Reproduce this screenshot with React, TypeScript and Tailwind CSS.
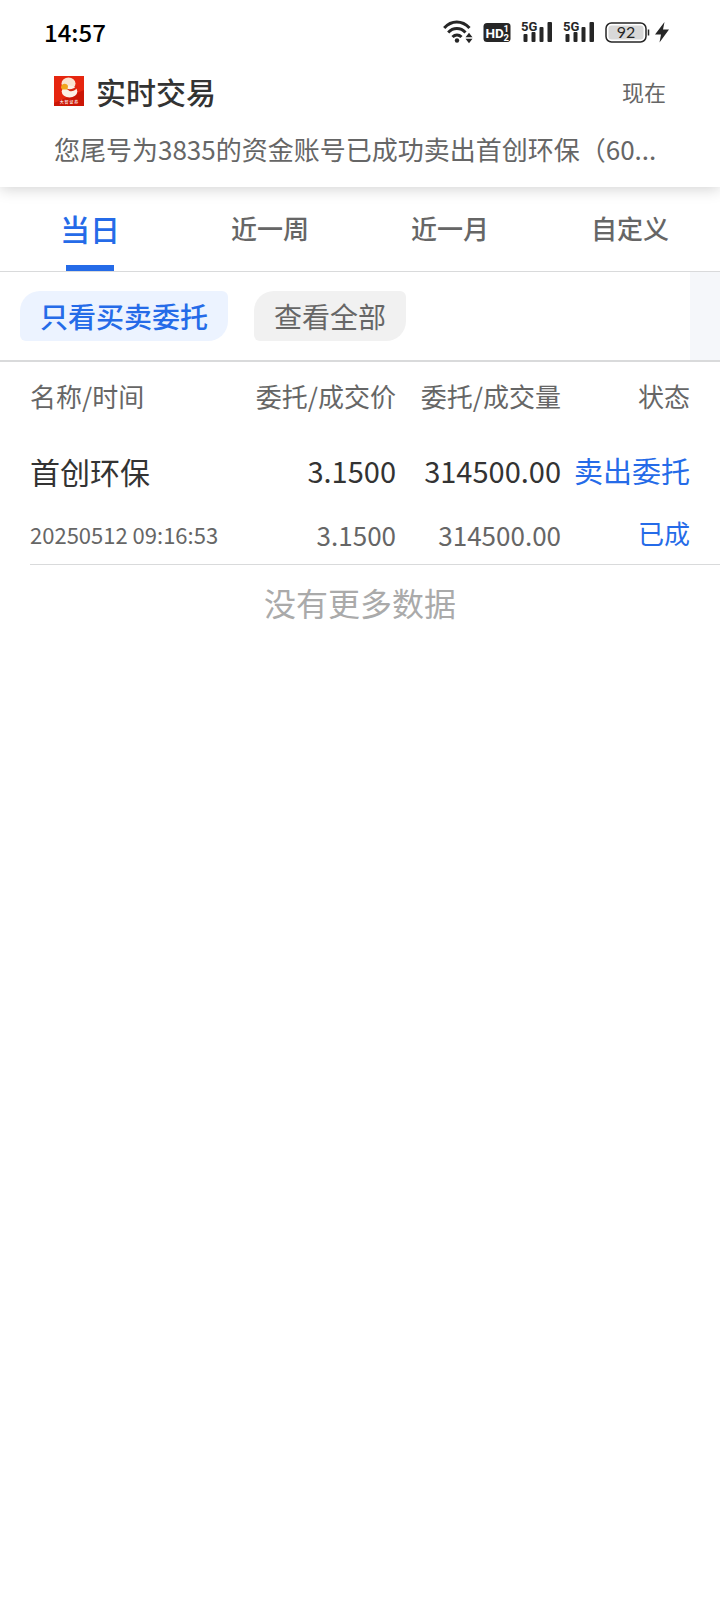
import { useState } from "react";
import clsx from "clsx";

const tabs = ["当日", "近一周", "近一月", "自定义"];
const filters = ["只看买卖委托", "查看全部"];

const orders = [
  {
    name: "首创环保",
    time: "20250512 09:16:53",
    price: "3.1500",
    dealPrice: "3.1500",
    amount: "314500.00",
    dealAmount: "314500.00",
    type: "卖出委托",
    status: "已成",
  },
];

function WifiIcon() {
  return (
    <svg className="w-[30px] h-6" viewBox="0 0 30 24" fill="none" stroke="#262626" strokeWidth="3">
      <path d="M1.2 8C8.500 0 19 0 26.500 8" />
      <path d="M5.200 12.500c5-5.200 12.300-5.200 17.300 0" />
      <path d="M9.500 17c2.700-2.700 6.300-2.700 9 0" />
      <circle cx="14" cy="20.500" r="2.200" fill="#262626" stroke="none" />
      <path d="M22.500 17.200l3.500-4.500 3.500 4.500zM22.500 18.800l3.500 4.500 3.500-4.500z" fill="#262626" stroke="none" />
    </svg>
  );
}

function HdIcon() {
  return (
    <svg className="w-7 h-6" viewBox="0 0 28 24" fontFamily="Roboto, sans-serif" fontWeight="700" fill="#fff">
      <rect x="0.500" y="3" width="27" height="19" rx="3.500" fill="#262626" />
      <text x="2.500" y="17.500" fontSize="13.500">HD</text>
      <text x="20.500" y="12" fontSize="9.500">1</text>
      <text x="20.500" y="20.500" fontSize="9.500">2</text>
    </svg>
  );
}

function SignalIcon() {
  return (
    <svg className="w-8 h-6" viewBox="0 0 32 24" fill="#262626">
      <text x="0" y="10.500" fontSize="13" fontWeight="700" fontFamily="Roboto, sans-serif">5G</text>
      <rect x="2.500" y="14" width="4" height="8" rx="1" />
      <rect x="10.500" y="12" width="4" height="10" rx="1" />
      <rect x="18.500" y="7" width="4" height="15" rx="1" />
      <rect x="26.500" y="2" width="4.500" height="20" rx="1" />
    </svg>
  );
}

function BatteryIcon() {
  return (
    <svg className="w-[46px] h-6" viewBox="0 0 46 24">
      <rect x="1" y="3" width="40" height="19" rx="5.500" fill="#fff" stroke="#262626" strokeWidth="1.500" />
      <rect x="3.500" y="5.500" width="35" height="14" rx="3" fill="#d8d8d8" />
      <path d="M43.500 9.500v6" stroke="#262626" strokeWidth="1.500" />
      <text x="21" y="18" fontSize="16" textAnchor="middle" fill="#262626" fontFamily="Lato, sans-serif">92</text>
    </svg>
  );
}

function BoltIcon() {
  return (
    <svg className="w-3.5 h-6" viewBox="0 0 14 24" fill="#262626">
      <path d="M9.500 2L0 14.500h6L4.500 22.500 14 9.500H8z" />
    </svg>
  );
}

function AppLogo() {
  return (
    <svg className="w-[30px] h-[30px] shrink-0" viewBox="0 0 30 30">
      <rect width="30" height="30" fill="#e6260f" />
      <path d="M0 27L30 14v16H0z" fill="#cb1606" />
      <ellipse cx="14.500" cy="7.500" rx="7" ry="6" fill="#f9e4d0" />
      <ellipse cx="15.500" cy="15.500" rx="7.800" ry="6" fill="#fcf0e6" />
      <path d="M12 12.500c4 1.500 8 .5 11.500-3-.5 4-4 6.500-8 5.500z" fill="#d8270f" />
      <path d="M7 11.500c0-4 5.500-5 7-1.500l-.5 3.500H8z" fill="#f0a51c" />
      <text x="15" y="28" fontSize="4" fontWeight="500" textAnchor="middle" fill="#fff" fontFamily="Noto Sans CJK SC, sans-serif">大 智 证 券</text>
    </svg>
  );
}

export default function App() {
  const [tab, setTab] = useState(0);
  const [filter, setFilter] = useState(0);

  return (
    <div className="min-h-screen bg-white text-[#666] font-['Noto_Sans_CJK_SC',sans-serif]">
      {/* Status bar + notification */}
      <header className="relative pb-2 bg-white shadow-[0_2px_14px_rgba(0,0,0,0.18)]">
        <div className="flex items-center justify-between h-16 pl-11 pr-[51px] text-black">
          <span className="text-2xl leading-9 font-medium">14:57</span>
          <div className="flex items-center">
            <WifiIcon />
            <span className="flex items-center gap-2.5 px-2.5">
              <HdIcon />
              <SignalIcon />
              <SignalIcon />
            </span>
            <BatteryIcon />
            <span className="pl-1"><BoltIcon /></span>
          </div>
        </div>
        <div className="px-[54px]">
          <div className="flex items-center gap-3 h-[54px]">
            <AppLogo />
            <h1 className="text-[30px] leading-9 font-medium text-[#333]">实时交易</h1>
            <span className="ml-auto text-[22px]">现在</span>
          </div>
          <p className="text-[26px] leading-[61px] whitespace-nowrap overflow-hidden">
            您尾号为3835的资金账号已成功卖出首创环保（60...
          </p>
        </div>
      </header>

      {/* Date range tabs */}
      <nav className="grid grid-cols-4 h-[85px] border-b border-[#d9dadb]">
        {tabs.map((label, i) => (
          <button
            key={label}
            onClick={() => setTab(i)}
            className={clsx(
              "flex flex-col items-center font-medium",
              i === tab ? "text-[30px] text-[#256be8]" : "text-[26px]"
            )}
          >
            <span className="flex-1 flex items-center pt-1 leading-9">{label}</span>
            <span className={clsx("w-12 h-1.5", i === tab && "bg-[#256be8]")} />
          </button>
        ))}
      </nav>

      {/* Filters */}
      <div className="flex h-[90px] border-b-2 border-[#d9dadb]">
        <div className="flex flex-1 items-center gap-[26px] pl-5">
          {filters.map((label, i) => (
            <button
              key={label}
              onClick={() => setFilter(i)}
              className={clsx(
                "h-[50px] px-5 text-[28px] leading-[50px] rounded-tl-[20px] rounded-tr-md rounded-br-[20px] rounded-bl-md",
                i === filter ? "bg-[#ecf3ff] text-[#256be8] font-medium" : "bg-[#f1f1f1]"
              )}
            >
              {label}
            </button>
          ))}
        </div>
        <div className="w-[30px] bg-[#f5f7fa]" />
      </div>

      {/* Orders */}
      <div className="pl-[30px]">
        <table className="w-full table-fixed whitespace-nowrap text-right text-[26px]">
          <thead>
            <tr className="h-[66px]">
              <th className="text-left font-normal">名称/时间</th>
              <th className="w-[148px] font-normal">委托/成交价</th>
              <th className="w-[165px] font-normal">委托/成交量</th>
              <th className="w-[159px] pr-[30px] font-normal">状态</th>
            </tr>
          </thead>
          {orders.map((o) => (
            <tbody key={o.time} className="border-b border-[#d9dadb]">
              <tr className="h-[86px] text-[29px] text-[#333]">
                <td className="text-left text-[30px]">{o.name}</td>
                <td>{o.price}</td>
                <td>{o.amount}</td>
                <td className="pr-[30px] text-[#256be8]">{o.type}</td>
              </tr>
              <tr className="h-[50px]">
                <td className="pb-2 text-left text-[22px]">{o.time}</td>
                <td className="pb-2">{o.dealPrice}</td>
                <td className="pb-2">{o.dealAmount}</td>
                <td className="pb-3 pr-[30px] leading-8 text-[#256be8]">{o.status}</td>
              </tr>
            </tbody>
          ))}
        </table>
      </div>

      <p className="pt-3 text-center text-[32px] leading-[50px] text-[#aaa]">没有更多数据</p>
    </div>
  );
}
